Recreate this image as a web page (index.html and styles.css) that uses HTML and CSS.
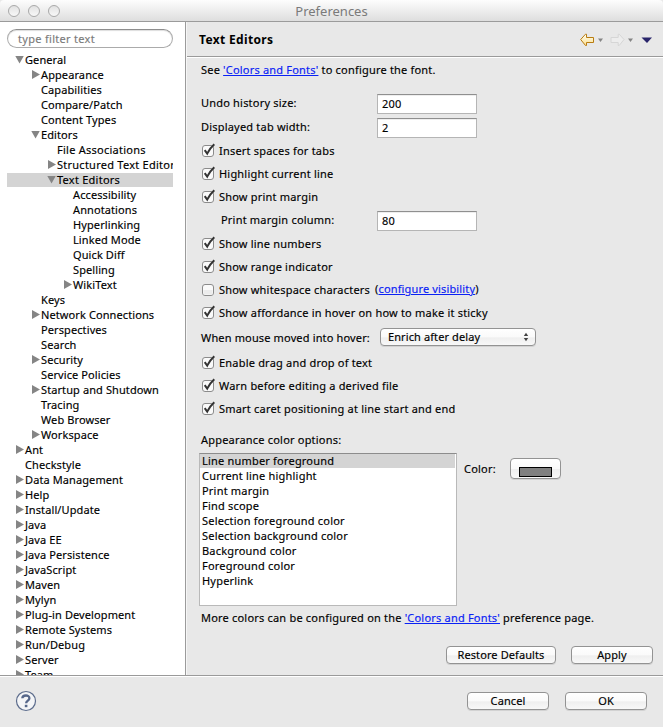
FILE: index.html
```html
<!DOCTYPE html>
<html lang="en">
<head>
<meta charset="utf-8">
<title>Preferences</title>
<link rel="stylesheet" href="styles.css">
</head>
<body>
<svg class="defs" width="0" height="0">
  <symbol id="check" viewBox="0 0 14 15">
    <rect x="0.5" y="2.5" width="11" height="11" rx="2.5" fill="#fafafa" stroke="#8b8b8b"/>
    <path d="M2.7 7.2 5.2 10.6Q8 5 12.3 1.2" fill="none" stroke="#333" stroke-width="2"/>
  </symbol>
  <symbol id="empty" viewBox="0 0 14 15">
    <rect x="0.5" y="2.5" width="11" height="11" rx="2.5" fill="#fafafa" stroke="#8b8b8b"/>
    <rect x="1.5" y="8" width="9" height="4.5" fill="#ececec"/>
  </symbol>
</svg>
<div class="window">
  <header class="titlebar">
    <div class="lights"><i></i><i></i><i></i></div>
    <div class="title">Preferences</div>
  </header>
  <div class="body">
    <aside class="side">
      <div class="filter">type filter text</div>
      <div class="tree">
        <div class="node d0 open">General</div>
        <div class="node d1 shut">Appearance</div>
        <div class="node d1">Capabilities</div>
        <div class="node d1">Compare/Patch</div>
        <div class="node d1">Content Types</div>
        <div class="node d1 open">Editors</div>
        <div class="node d2">File Associations</div>
        <div class="node d2 shut">Structured Text Editor</div>
        <div class="node d2 open selected">Text Editors</div>
        <div class="node d3">Accessibility</div>
        <div class="node d3">Annotations</div>
        <div class="node d3">Hyperlinking</div>
        <div class="node d3">Linked Mode</div>
        <div class="node d3">Quick Diff</div>
        <div class="node d3">Spelling</div>
        <div class="node d3 shut">WikiText</div>
        <div class="node d1">Keys</div>
        <div class="node d1 shut">Network Connections</div>
        <div class="node d1">Perspectives</div>
        <div class="node d1">Search</div>
        <div class="node d1 shut">Security</div>
        <div class="node d1">Service Policies</div>
        <div class="node d1 shut">Startup and Shutdown</div>
        <div class="node d1">Tracing</div>
        <div class="node d1">Web Browser</div>
        <div class="node d1 shut">Workspace</div>
        <div class="node d0 shut">Ant</div>
        <div class="node d0">Checkstyle</div>
        <div class="node d0 shut">Data Management</div>
        <div class="node d0 shut">Help</div>
        <div class="node d0 shut">Install/Update</div>
        <div class="node d0 shut">Java</div>
        <div class="node d0 shut">Java EE</div>
        <div class="node d0 shut">Java Persistence</div>
        <div class="node d0 shut">JavaScript</div>
        <div class="node d0 shut">Maven</div>
        <div class="node d0 shut">Mylyn</div>
        <div class="node d0 shut">Plug-in Development</div>
        <div class="node d0 shut">Remote Systems</div>
        <div class="node d0 shut">Run/Debug</div>
        <div class="node d0 shut">Server</div>
        <div class="node d0 shut">Team</div>
      </div>
    </aside>
    <main class="main">
      <div class="head">
        <h1>Text Editors</h1>
        <svg class="nav" width="74" height="14" viewBox="0 0 74 14">
          <defs><linearGradient id="gold" x1="0" y1="0" x2="0" y2="1"><stop offset="0" stop-color="#fffef0"/><stop offset="1" stop-color="#fbdf90"/></linearGradient></defs>
          <path d="M0.7 6.5 5.5 1.2H6.5V4.5H13.5V9.5H6.5V12.5H5.5Z" fill="url(#gold)" stroke="#b87c12"/>
          <path d="M18 5.5H23L20.5 9Z" fill="#858585"/>
          <path d="M44 6.5 39.2 1.2H38.2V4.5H31V9.5H38.2V12.5H39.2Z" fill="#ededed" stroke="#d6d6d6"/>
          <path d="M48 5.5H53L50.5 9Z" fill="#858585"/>
          <path d="M61.5 4.5H72L67 10Z" fill="#29256b"/>
        </svg>
      </div>
      <div class="page">
        <div class="row see">See&nbsp;<a>'Colors and Fonts'</a>&nbsp;to configure the font.</div>
        <div class="row field"><label>Undo history size:</label><div class="input">200</div></div>
        <div class="row field short"><label>Displayed tab width:</label><div class="input">2</div></div>
        <div class="row check"><svg><use href="#check"/></svg>Insert spaces for tabs</div>
        <div class="row check"><svg><use href="#check"/></svg>Highlight current line</div>
        <div class="row check"><svg><use href="#check"/></svg>Show print margin</div>
        <div class="row field nested"><label>Print margin column:</label><div class="input">80</div></div>
        <div class="row check"><svg><use href="#check"/></svg>Show line numbers</div>
        <div class="row check"><svg><use href="#check"/></svg>Show range indicator</div>
        <div class="row check"><svg><use href="#empty"/></svg>Show whitespace characters<span class="config">(<a>configure visibility</a>)</span></div>
        <div class="row check"><svg><use href="#check"/></svg>Show affordance in hover on how to make it sticky</div>
        <div class="row hover"><label>When mouse moved into hover:</label>
          <div class="select"><span>Enrich after delay</span><svg width="6" height="10" viewBox="0 0 6 10"><path d="M0.8 4 3 0.8 5.2 4ZM0.8 6 3 9.2 5.2 6Z" fill="#444"/></svg></div>
        </div>
        <div class="row check"><svg><use href="#check"/></svg>Enable drag and drop of text</div>
        <div class="row check"><svg><use href="#check"/></svg>Warn before editing a derived file</div>
        <div class="row check"><svg><use href="#check"/></svg>Smart caret positioning at line start and end</div>
        <div class="row caption">Appearance color options:</div>
        <div class="colors">
          <div class="list">
            <div class="item picked">Line number foreground</div>
            <div class="item">Current line highlight</div>
            <div class="item">Print margin</div>
            <div class="item">Find scope</div>
            <div class="item">Selection foreground color</div>
            <div class="item">Selection background color</div>
            <div class="item">Background color</div>
            <div class="item">Foreground color</div>
            <div class="item">Hyperlink</div>
          </div>
          <div class="pick"><label>Color:</label><div class="well"><i></i></div></div>
        </div>
        <div class="row more">More colors can be configured on the&nbsp;<a>'Colors and Fonts'</a>&nbsp;preference page.</div>
        <div class="actions"><div class="btn wide">Restore Defaults</div><div class="btn">Apply</div></div>
      </div>
    </main>
  </div>
  <footer class="foot">
    <svg class="help" width="22" height="22" viewBox="0 0 22 22"><circle cx="11" cy="11" r="9.5" fill="#f4f5f7" stroke="#5c6c8c" stroke-width="1.2"/><path d="M7.3 8.3C7.5 4.6 14.4 4.6 14.4 8.2C14.4 10.6 11.1 10.6 11.1 13.3" fill="none" stroke="#56678a" stroke-width="2.3"/><rect x="9.8" y="14.8" width="2.6" height="2.4" fill="#56678a"/></svg>
    <div class="btn">Cancel</div><div class="btn">OK</div>
  </footer>
</div>
</body>
</html>
```
FILE: styles.css
```css
* { box-sizing: border-box; }
body { margin: 0; font: 11px/15px "Noto Sans", "Open Sans", sans-serif; color: #000; letter-spacing: 0.1px; -webkit-text-stroke: 0.15px; }
a { color: #0a22f5; text-decoration: underline; text-underline-offset: 1px; }
i { display: block; }
.defs { display: block; height: 0; }
.window { width: 663px; height: 727px; display: flex; flex-direction: column; background: #e8e8e8; overflow: hidden; }

.titlebar { flex: none; height: 22px; display: grid; grid-template-columns: 62px 1fr 62px; align-items: center; background: linear-gradient(#fdfdfd, #dedede); border-bottom: 1px solid #9b9b9b; border-radius: 4px 4px 0 0; }
.lights { display: flex; gap: 8px; padding-left: 8px; }
.lights i { flex: none; width: 12px; height: 12px; border: 1px solid #a9a9a9; border-radius: 50%; background: linear-gradient(#e2e2e2, #f8f8f8); }
.title { text-align: center; font-size: 13px; padding-top: 2px; color: #7a7a7a; letter-spacing: 0; -webkit-text-stroke: 0; }

.body { flex: none; height: 654px; display: flex; border-bottom: 1px solid #9a9a9a; }
.side { flex: none; width: 186px; padding: 7px 12px 0 7px; background: #fff; border-right: 1px solid #9b9b9b; overflow: hidden; }
.filter { height: 19px; padding: 0 10px; line-height: 18px; color: #7b7b7b; border: 1px solid #ababab; border-top-color: #8e8e8e; border-radius: 10px; box-shadow: inset 0 1px 1px #ddd; letter-spacing: 0.3px; }
.tree { margin-top: 5px; height: 622px; overflow: hidden; }
.node { display: flex; align-items: center; height: 15px; padding-bottom: 2px; white-space: nowrap; overflow: hidden; }
.node::before { content: ""; flex: none; width: 8px; height: 9px; margin-right: 1px; }
.shut::before { background: #858585; clip-path: polygon(0 0, 100% 50%, 0 100%); }
.open::before { width: 9px; height: 8px; margin: 0 1px 0 -1px; background: #858585; clip-path: polygon(0 0, 100% 0, 50% 100%); }
.d0 { padding-left: 9px; }
.d1 { padding-left: 25px; }
.d2 { padding-left: 41px; letter-spacing: 0.25px; }
.d3 { padding-left: 57px; }
.selected { background: linear-gradient(#d4d4d4, #d4d4d4) 0 0 / 100% 14px no-repeat; }

.main { flex: 1; display: flex; flex-direction: column; border-left: 1px solid #f6f6f6; }
.head { flex: none; height: 36px; display: flex; justify-content: space-between; align-items: center; padding: 0 9px 0 12px; border-bottom: 1px solid #fff; box-shadow: inset 0 -1px #9a9a9a; }
h1 { margin: 0; font-size: 12px; line-height: 18px; font-weight: 700; letter-spacing: 0.35px; -webkit-text-stroke: 0; }
.page { padding: 0 10px 0 14px; letter-spacing: 0.2px; }
.row { display: flex; align-items: center; height: 23px; white-space: nowrap; }
.see { height: 24px; padding-bottom: 2px; margin-bottom: 10px; }
.field { height: 24px; align-items: flex-start; padding-top: 2px; }
.short { height: 23px; }
.field label { flex: none; width: 176px; margin-top: 1px; }
.input { width: 100px; height: 20px; padding: 0 4px; line-height: 17px; background: #fff; border: 1px solid #b5b5b5; border-top-color: #8f8f8f; box-shadow: inset 0 1px #eee; }
.nested { padding: 3px 0 0 20px; }
.nested label { width: 156px; }
.check svg { flex: none; width: 14px; height: 15px; margin: 0 3px 0 1px; }
.config { margin-left: 5px; padding-bottom: 2px; letter-spacing: 0.15px; }
.hover { height: 27px; letter-spacing: 0.15px; }
.hover label { width: 179px; }
.select, .btn, .well { border: 1px solid #939393; border-radius: 4px; background: linear-gradient(#fff 0%, #fafafa 50%, #efefef 55%, #f8f8f8 100%); box-shadow: 0 1px #d2d2d2; letter-spacing: 0.1px; }
.select { display: flex; justify-content: space-between; align-items: center; width: 156px; height: 18px; padding: 0 6px 0 7px; margin-bottom: 1px; }
.select span { padding-bottom: 2px; }
.caption { height: 33px; padding-top: 5px; }
.colors { display: flex; height: 153px; margin-left: -2px; }
.list { flex: none; width: 258px; padding: 0 1px 0 0; background: #fff; border: 1px solid #b9b9b9; border-top-color: #8c8c8c; }
.item { height: 15px; line-height: 13px; padding-left: 2px; }
.picked { background: linear-gradient(#d4d4d4, #d4d4d4) 0 0 / 100% 14px no-repeat; }
.pick { display: flex; align-items: center; height: 30px; margin-left: 7px; }
.pick label { width: 46px; }
.well { width: 51px; height: 21px; padding: 8px 8px 0; }
.well i { height: 10px; width: 33px; background: #808080; border: 1px solid #000; }
.more { height: 24px; padding-bottom: 2px; }
.actions { display: flex; justify-content: flex-end; gap: 15px; padding-top: 16px; }
.btn { width: 82px; height: 18px; line-height: 16px; text-align: center; }
.wide { width: 110px; }
.foot { flex: 1; display: flex; align-items: center; gap: 16px; padding: 0 16px 2px 15px; border-top: 1px solid #fff; }
.help { margin-right: auto; }
```
